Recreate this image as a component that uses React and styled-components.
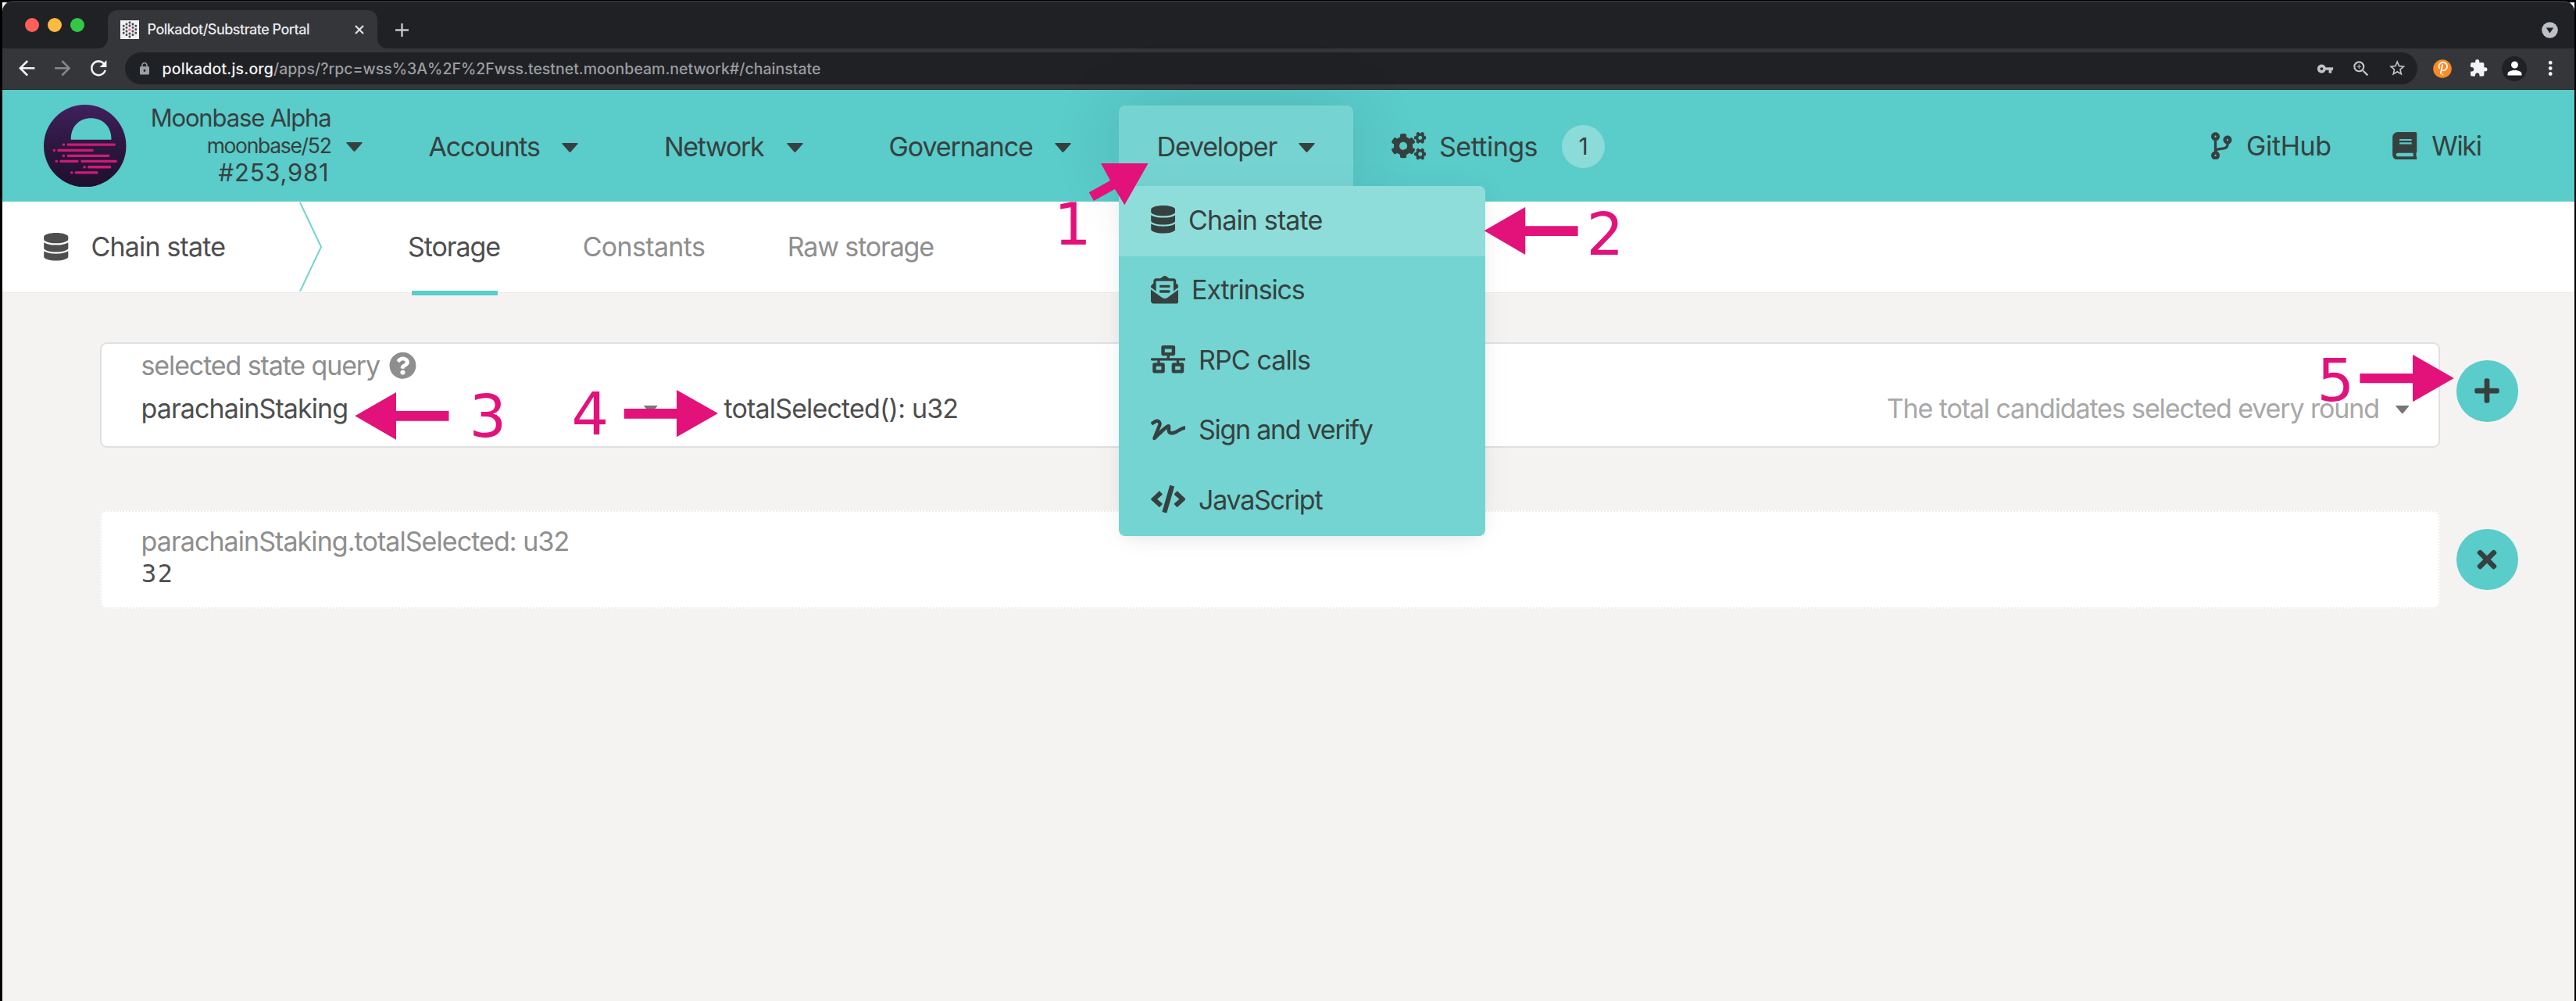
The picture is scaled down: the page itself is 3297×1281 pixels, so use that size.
import React from "react";
import styled, { createGlobalStyle, css } from "styled-components";
import {
  FaDatabase,
  FaEnvelopeOpenText,
  FaNetworkWired,
  FaSignature,
  FaCode,
  FaCogs,
  FaCodeBranch,
  FaBook,
  FaQuestionCircle,
  FaPlus,
  FaTimes,
} from "react-icons/fa";
import {
  MdArrowBack,
  MdArrowForward,
  MdRefresh,
  MdLock,
  MdVpnKey,
  MdZoomIn,
  MdStarBorder,
  MdExtension,
  MdPerson,
  MdMoreVert,
} from "react-icons/md";

const teal = "#5acccA";
const ink = "#36413f";
const pink = "#e3127b";

const Global = createGlobalStyle`
  * { box-sizing: border-box; }
  body { margin: 0; background: #000; overflow: hidden; }
`;

const Frame = styled.div`
  position: relative;
  display: flex;
  flex-direction: column;
  height: 1281px;
  padding: 1px 2px 0 3px;
  background: #000;
  font-family: Inter, "Liberation Sans", sans-serif;
  font-weight: 430;
  color: #4e4e4e;
  overflow: hidden;
`;

const Text = styled.span`
  flex: none;
  white-space: pre;
  font-size: ${(p) => p.$size || 34}px;
  letter-spacing: ${(p) => p.$track || 0}px;
`;

/* ---------- browser chrome ---------- */

const StripBack = styled.div`
  flex: none;
  background: linear-gradient(#000 2px, #fff 2px);
`;

const TabStrip = styled.div`
  display: flex;
  align-items: flex-end;
  height: 61px;
  padding: 0 21px 0 29px;
  background: #202124;
  border-top: 2px solid #303032;
  border-radius: 14px 14px 0 0;
`;

const Lights = styled.div`
  display: flex;
  gap: 10.4px;
  align-self: center;
  margin-top: 1px;
  margin-bottom: 2px;
  width: 105.5px;
`;

const Light = styled.span`
  width: 18.4px;
  height: 18.4px;
  border-radius: 50%;
  background: ${(p) => p.$color};
`;

const BrowserTab = styled.div`
  position: relative;
  display: flex;
  align-items: center;
  width: 345px;
  height: 49px;
  padding: 0 17px 0 16px;
  background: #35363a;
  border-radius: 12px 12px 0 0;
  color: #e9eaed;
  font-weight: 500;
  &::before,
  &::after {
    content: "";
    position: absolute;
    bottom: 0;
    width: 12px;
    height: 12px;
  }
  &::before {
    left: -12px;
    background: radial-gradient(circle at 0 0, transparent 11.5px, #35363a 12.2px);
  }
  &::after {
    right: -12px;
    background: radial-gradient(circle at 100% 0, transparent 11.5px, #35363a 12.2px);
  }
`;

const Favicon = styled.svg`
  width: 24px;
  height: 24px;
  margin-right: 11px;
`;

const CloseMark = styled.svg`
  width: 12px;
  height: 12px;
  margin-left: auto;
  stroke: #dfe1e5;
  stroke-width: 2.2;
`;

const NewTab = styled.svg`
  align-self: center;
  width: 17px;
  height: 17px;
  margin: 12px 0 0 23px;
  stroke: #c4c7cb;
  stroke-width: 2.4;
`;

const TabSearch = styled.svg`
  align-self: center;
  width: 21px;
  height: 21px;
  margin: 12px 0 0 auto;
`;

const Toolbar = styled.div`
  flex: none;
  display: flex;
  align-items: center;
  height: 53px;
  padding: 0 8px 1px 11.5px;
  gap: 5.7px;
  background: #35363a;
  border-bottom: 1px solid #26272a;
`;

const Slot = styled.span`
  flex: none;
  display: flex;
  align-items: center;
  justify-content: center;
  width: ${(p) => p.$w || 46}px;
  color: ${(p) => p.$color || "#f1f3f4"};
  font-size: ${(p) => p.$size}px;
`;

const Address = styled.div`
  flex: 1;
  display: flex;
  align-items: center;
  height: 40.5px;
  margin: 0 3px 0 8.5px;
  padding: 0 3px 0 14.5px;
  border-radius: 21px;
  background: #202124;
  color: #9a9da1;
  font-weight: 500;
`;

const Host = styled(Text)`
  margin-left: 13px;
  color: #f4f5f6;
`;

const Spacer = styled.span`
  flex: 1;
`;

const Actions = styled.div`
  display: flex;
`;

const Avatar = styled.span`
  display: flex;
  align-items: center;
  justify-content: center;
  width: 32px;
  height: 32px;
  border-radius: 50%;
  background: #202124;
  color: #fff;
`;

/* ---------- app header ---------- */

const Header = styled.header`
  position: relative;
  z-index: 2;
  flex: none;
  display: flex;
  align-items: center;
  height: 143px;
  padding-left: 53px;
  background: ${teal};
  color: ${ink};
`;

const Logo = styled.svg`
  flex: none;
  width: 105.5px;
  height: 105.5px;
`;

const ChainInfo = styled.div`
  display: flex;
  flex-direction: column;
  align-items: flex-end;
  width: 262px;
  margin-right: 19px;
  line-height: 34.7px;
`;

const BlockNumber = styled(Text)`
  margin-right: 2px;
`;

const Triangle = styled.svg`
  flex: none;
  width: ${(p) => p.$w || 21}px;
  height: ${(p) => p.$h || 12}px;
  margin-top: 3px;
  fill: ${(p) => p.$color || ink};
`;

const Nav = styled.nav`
  display: flex;
  align-items: center;
  gap: 12.5px;
  margin-left: 36.5px;
`;

const NavItem = styled.div`
  position: relative;
  display: flex;
  align-items: center;
  justify-content: space-between;
  width: ${(p) => p.$w}px;
  height: 103px;
  padding: 2px 49px 0 48.5px;
  border-radius: 8px 8px 0 0;
  ${(p) =>
    p.$open &&
    css`
      background: #75d4d2;
      box-shadow: 0 0 90px rgba(0, 0, 0, 0.12);
    `}
`;

const Settings = styled.div`
  display: flex;
  align-items: center;
  height: 103px;
  padding: 1px 0 0 36.5px;
`;

const SettingsLabel = styled(Text)`
  width: 157px;
  margin-left: 17px;
`;

const Badge = styled.span`
  display: flex;
  align-items: center;
  justify-content: center;
  width: 55px;
  height: 55px;
  border-radius: 50%;
  background: #8bdbd8;
`;

const HeaderLinks = styled.div`
  display: flex;
  margin-left: auto;
  margin-right: 119.5px;
`;

const HeaderLink = styled.div`
  display: flex;
  align-items: center;
  margin-left: 78.5px;
  gap: 18.5px;
`;

const Glyph = styled.span`
  flex: none;
  display: flex;
  svg {
    width: ${(p) => p.$w}px;
    height: ${(p) => p.$h || 35.6}px;
  }
`;

const Menu = styled.div`
  position: absolute;
  top: 103px;
  left: 0;
  width: 468.5px;
  border-radius: 0 8px 8px 8px;
  background: #74d4d1;
  box-shadow: 0 8px 20px -8px rgba(0, 0, 0, 0.1), 0 0 44px rgba(0, 0, 0, 0.04);
  overflow: hidden;
`;

const MenuItem = styled.div`
  display: flex;
  align-items: center;
  gap: 17px;
  height: 89.5px;
  padding: 0 0 3px 40.5px;
  background: ${(p) => (p.$active ? "#8eddda" : "transparent")};
`;

/* ---------- section tabs ---------- */

const SectionBar = styled.div`
  flex: none;
  display: flex;
  align-items: center;
  height: 116.5px;
  padding-left: 53px;
  background: #fff;
  border-bottom: 1px solid #ebebea;
`;

const SectionTitle = styled(Text)`
  width: 266.5px;
  margin-left: 29px;
`;

const Chevron = styled.svg`
  width: 29px;
  height: 115px;
  margin-right: 110px;
  fill: none;
  stroke: #74d4d1;
  stroke-width: 2;
`;

const SectionTab = styled.div`
  position: relative;
  display: flex;
  align-items: center;
  height: 115px;
  margin-right: 105.6px;
  color: ${(p) => (p.$active ? "#4e4e4e" : "#8e8e8e")};
  ${(p) =>
    p.$active &&
    css`
      &::after {
        content: "";
        position: absolute;
        left: 5px;
        right: 3px;
        bottom: -5px;
        height: 6px;
        border-radius: 1px;
        background: ${teal};
      }
    `}
`;

/* ---------- content ---------- */

const Main = styled.main`
  flex: 1;
  padding: 63.5px 72.5px 0 124.5px;
  background: #f4f3f1;
`;

const Row = styled.div`
  display: flex;
  align-items: center;
  gap: 21.5px;
`;

const QueryCard = styled.section`
  flex: 1;
  height: 134.5px;
  padding: 0.5px 37px 0 51px;
  border: 2px solid #e0e0e0;
  border-radius: 9px;
  background: #fff;
  line-height: 55px;
`;

const FieldLabel = styled.div`
  display: flex;
  align-items: center;
  gap: 11.5px;
  height: 54.5px;
  color: #8e8e8e;
`;

const Values = styled.div`
  display: flex;
  align-items: center;
  height: 55px;
`;

const ModulePick = styled.div`
  display: flex;
  align-items: center;
  justify-content: space-between;
  width: 746px;
  padding-right: 85px;
`;

const Hint = styled(Text)`
  margin-left: auto;
  margin-right: 21px;
  color: #a8a8a8;
`;

const ResultRow = styled(Row)`
  margin-top: 80px;
`;

const ResultCard = styled.section`
  flex: 1;
  display: flex;
  flex-direction: column;
  height: 126.5px;
  padding: 17.5px 50px 0 51px;
  border: 2px dotted #efeeec;
  border-radius: 9px;
  background: #fff;
  line-height: 41.5px;
`;

const ResultLabel = styled(Text)`
  color: #8e8e8e;
`;

const ResultValue = styled(Text)`
  margin-left: 0.5px;
  font-family: "DejaVu Sans Mono", monospace;
`;

const RoundButton = styled.button`
  flex: none;
  display: flex;
  align-items: center;
  justify-content: center;
  width: 78.5px;
  height: 78.5px;
  margin: 0 0 ${(p) => p.$lift || 0}px;
  padding: 0;
  border: 0;
  border-radius: 50%;
  background: ${teal};
  color: ${ink};
`;

/* ---------- step annotations drawn over the page ---------- */

const Overlay = styled.div`
  position: absolute;
  inset: 0;
  z-index: 5;
  color: ${pink};
`;

const Arrows = styled.svg`
  position: absolute;
  inset: 0;
  fill: ${pink};
`;

const Step = styled.span`
  position: absolute;
  left: ${(p) => p.$x}px;
  top: ${(p) => p.$base - 63.5}px;
  font: 75px/75px "DejaVu Sans", sans-serif;
`;

const Caret = (props) => (
  <Triangle viewBox="0 0 21 12" preserveAspectRatio="none" {...props}>
    <path d="M0.8 0H20.2Q21 0.4 20.4 1.2L11.4 11.4Q10.5 12.2 9.6 11.4L0.6 1.2Q0 .4 .8 0Z" />
  </Triangle>
);

const faviconDots = [
  [12, 3], [12, 7], [12, 17], [12, 21],
  [8, 5], [8, 9.3], [8, 14], [8, 18.5],
  [16, 5], [16, 9.3], [16, 14], [16, 18.5],
  [4.2, 7.2], [4.2, 11.7], [4.2, 16.2],
  [19.8, 7.2], [19.8, 11.7], [19.8, 16.2],
];

const logoBars = [
  [71, 148, 10], [89, 148, 186],
  [35, 170, 10], [52, 170, 139],
  [71, 191, 10], [89, 191, 164],
  [44, 212, 10], [61, 212, 72], [142, 212, 139],
  [151, 234, 10], [168, 234, 90],
  [102, 255, 10], [119, 255, 89],
];

const menuItems = [
  { label: "Chain state", track: -0.85, icon: <FaDatabase />, w: 31.5, active: true },
  { label: "Extrinsics", track: -1.15, icon: <FaEnvelopeOpenText />, w: 35.6 },
  { label: "RPC calls", track: -0.9, icon: <FaNetworkWired />, w: 44.5 },
  { label: "Sign and verify", track: -1.27, icon: <FaSignature />, w: 44.5 },
  { label: "JavaScript", track: -1.25, icon: <FaCode />, w: 44.5 },
];

function Chrome() {
  return (
    <>
      <StripBack>
        <TabStrip>
          <Lights>
            <Light $color="#ff5f58" />
            <Light $color="#febb40" />
            <Light $color="#33c748" />
          </Lights>
          <BrowserTab>
            <Favicon viewBox="0 0 24 24">
              <rect width="24" height="24" fill="#f2f2f2" />
              {faviconDots.map(([x, y]) => (
                <rect key={`${x}-${y}`} x={x - 1.3} y={y - 1.4} width="2.6" height="2.8" rx=".7" fill="#4b4b4b" />
              ))}
              <rect x="10.4" y="10.4" width="3.2" height="3.2" rx="1" fill="#e86bb9" />
            </Favicon>
            <Text $size={18} $track={-0.51}>Polkadot/Substrate Portal</Text>
            <CloseMark viewBox="0 0 12 12">
              <path d="M1 1L11 11M11 1L1 11" />
            </CloseMark>
          </BrowserTab>
          <NewTab viewBox="0 0 17 17">
            <path d="M8.5 0V17M0 8.5H17" />
          </NewTab>
          <TabSearch viewBox="0 0 21 21">
            <circle cx="10.5" cy="10.5" r="10.3" fill="#bdc1c6" />
            <path d="M5.8 7.6H15.2L10.5 14.6Z" fill="#202124" />
          </TabSearch>
        </TabStrip>
      </StripBack>
      <Toolbar>
        <Slot $w={40} $size={30.5}><MdArrowBack /></Slot>
        <Slot $w={40} $size={30.5} $color="#85878b"><MdArrowForward /></Slot>
        <Slot $w={40} $size={30.5}><MdRefresh /></Slot>
        <Address>
          <Slot $w={20} $size={18} $color="#9aa0a6"><MdLock /></Slot>
          <Host $size={19.5} $track={0.2}>polkadot.js.org</Host>
          <Text $size={19.5}>/apps/?rpc=wss%3A%2F%2Fwss.testnet.moonbeam.network#/chainstate</Text>
          <Spacer />
          <Slot $size={22} $color="#c0c3c7"><MdVpnKey /></Slot>
          <Slot $size={26} $color="#c0c3c7"><MdZoomIn /></Slot>
          <Slot $size={24.5} $color="#c0c3c7"><MdStarBorder /></Slot>
        </Address>
        <Actions>
          <Slot>
            <svg width="24" height="24" viewBox="0 0 24 24">
              <circle cx="12" cy="12" r="11.8" fill="#fa8a25" />
              <path d="M8 11.2A5.3 5.3 0 1 1 12.8 14.2M12 7.2L9.8 18" fill="none" stroke="#fff" strokeWidth="1.8" strokeLinecap="round" />
              <circle cx="12.4" cy="19.4" r="1" fill="#fff" />
            </svg>
          </Slot>
          <Slot $size={24.5}><MdExtension /></Slot>
          <Slot $size={27}><Avatar><MdPerson /></Avatar></Slot>
          <Slot $size={28.5}><MdMoreVert /></Slot>
        </Actions>
      </Toolbar>
    </>
  );
}

function AppHeader() {
  return (
    <Header>
      <Logo viewBox="0 0 316 316">
        <defs>
          <linearGradient id="night" x1="0" y1="0" x2="0" y2="1">
            <stop offset="0" stopColor="#40205e" />
            <stop offset="0.5" stopColor="#2c173f" />
            <stop offset="1" stopColor="#1f0f2d" />
          </linearGradient>
        </defs>
        <circle cx="158" cy="158" r="158" fill="url(#night)" />
        <path d="M104 134C103 82 138 52 181 52S260 82 259 134Z" fill={teal} />
        {logoBars.map(([x, y, w]) => (
          <rect key={`${x}-${y}`} x={x} y={y} width={w} height="10" rx="4" fill="#cf1a78" />
        ))}
      </Logo>
      <ChainInfo>
        <Text $size={31} $track={-1.15}>Moonbase Alpha</Text>
        <Text $size={26.5} $track={-1.31}>moonbase/52</Text>
        <BlockNumber $size={31} $track={0.8}>#253,981</BlockNumber>
      </ChainInfo>
      <Caret />
      <Nav>
        <NavItem $w={289}>
          <Text $track={-1.17}>Accounts</Text>
          <Caret />
        </NavItem>
        <NavItem $w={275}>
          <Text $track={-1.33}>Network</Text>
          <Caret />
        </NavItem>
        <NavItem $w={330.5}>
          <Text $track={-1.1}>Governance</Text>
          <Caret />
        </NavItem>
        <NavItem $w={299.5} $open>
          <Text $track={-1.15}>Developer</Text>
          <Caret />
          <Menu>
            {menuItems.map((m) => (
              <MenuItem key={m.label} $active={m.active}>
                <Glyph $w={m.w}>{m.icon}</Glyph>
                <Text $track={m.track}>{m.label}</Text>
              </MenuItem>
            ))}
          </Menu>
        </NavItem>
        <Settings>
          <Glyph $w={44.6}><FaCogs /></Glyph>
          <SettingsLabel $track={-0.55}>Settings</SettingsLabel>
          <Badge><Text $size={30}>1</Text></Badge>
        </Settings>
      </Nav>
      <HeaderLinks>
        <HeaderLink>
          <Glyph $w={26.5}><FaCodeBranch /></Glyph>
          <Text $track={-0.35}>GitHub</Text>
        </HeaderLink>
        <HeaderLink>
          <Glyph $w={31.5}><FaBook /></Glyph>
          <Text $track={-1.37}>Wiki</Text>
        </HeaderLink>
      </HeaderLinks>
    </Header>
  );
}

export default function App() {
  return (
    <Frame>
      <Global />
      <Chrome />
      <AppHeader />
      <SectionBar>
        <Glyph $w={31.5}><FaDatabase /></Glyph>
        <SectionTitle $track={-0.82}>Chain state</SectionTitle>
        <Chevron viewBox="0 0 29 115">
          <path d="M1 1L28 58L1 115" />
        </Chevron>
        <SectionTab $active><Text $track={-1.07}>Storage</Text></SectionTab>
        <SectionTab><Text $track={-0.66}>Constants</Text></SectionTab>
        <SectionTab><Text $track={-1.16}>Raw storage</Text></SectionTab>
      </SectionBar>
      <Main>
        <Row>
          <QueryCard>
            <FieldLabel>
              <Text $track={-1.12}>selected state query</Text>
              <Glyph $w={35}><FaQuestionCircle /></Glyph>
            </FieldLabel>
            <Values>
              <ModulePick>
                <Text $track={-0.9}>parachainStaking</Text>
                <Caret $w={17.5} $h={10.5} $color="#777" />
              </ModulePick>
              <Text $track={-0.83}>totalSelected(): u32</Text>
              <Hint $track={-1.12}>The total candidates selected every round</Hint>
              <Caret $w={17.5} $h={10.5} $color="#777" />
            </Values>
          </QueryCard>
          <RoundButton $lift={10}><Glyph $w={36} $h={36}><FaPlus /></Glyph></RoundButton>
        </Row>
        <ResultRow>
          <ResultCard>
            <ResultLabel $track={-0.93}>parachainStaking.totalSelected: u32</ResultLabel>
            <ResultValue $size={32} $track={1.6}>32</ResultValue>
          </ResultCard>
          <RoundButton><Glyph $w={36} $h={36}><FaTimes /></Glyph></RoundButton>
        </ResultRow>
      </Main>
      <Overlay>
        <Arrows width="3297" height="1281" viewBox="0 0 3297 1281">
          <polygon points="1409,209 1469.6,209 1439.3,262.3 1427,242 1400,257 1393.7,246.3 1421,231" />
          <polygon points="1899.6,295.3 1952.2,265 1952.2,289.3 2019.6,289.3 2019.6,302 1952.2,302 1952.2,326" />
          <polygon points="454.3,532.3 507,502 507,526 574.5,526 574.5,538.7 507,538.7 507,562.7" />
          <polygon points="919,529 866,499 866,523 798.7,523 798.7,535.7 866,535.7 866,559.3" />
          <polygon points="3140.8,484 3088,453.7 3088,478 3020.4,478 3020.4,490.3 3088,490.3 3088,514.3" />
        </Arrows>
        <Step $x={1349} $base={313.3}>1</Step>
        <Step $x={2030.5} $base={326}>2</Step>
        <Step $x={600.5} $base={559.3}>3</Step>
        <Step $x={731.5} $base={556}>4</Step>
        <Step $x={2965.5} $base={513.5}>5</Step>
      </Overlay>
    </Frame>
  );
}
